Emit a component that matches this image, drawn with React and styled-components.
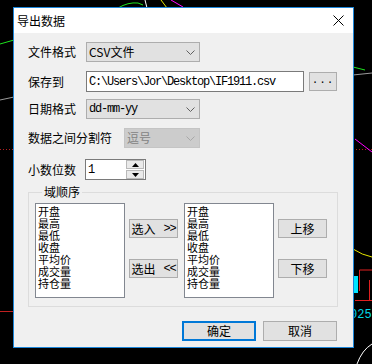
import React from 'react';
import styled, { createGlobalStyle } from 'styled-components';

const GlobalStyle = createGlobalStyle`
  html, body {
    margin: 0;
    padding: 0;
    background: #000;
  }
  body {
    font-family: "Noto Sans CJK SC", "DejaVu Sans", sans-serif;
    font-size: 12px;
    color: #000;
  }
`;

const Desktop = styled.div`
  position: relative;
  width: 372px;
  height: 364px;
  overflow: hidden;
  box-sizing: border-box;
  padding: 7px 0 0 13px;
  background: #000;
`;

const Chart = styled.svg`
  position: absolute;
  left: 0;
  top: 0;
  width: 372px;
  height: 364px;
`;

const Dialog = styled.div`
  position: relative;
  width: 341px;
  height: 341px;
  box-sizing: border-box;
  border: 1px solid #1c86d9;
  background: #f0f0f0;
  display: flex;
  flex-direction: column;
`;

const TitleBar = styled.div`
  height: 25px;
  background: #fff;
  display: flex;
  align-items: center;
  justify-content: space-between;
  padding: 0 9px 0 3px;
  font-size: 12px;
`;

const Body = styled.div`
  flex: 1;
  display: flex;
  flex-direction: column;
  padding: 9px 16px 0 14px;
`;

const Row = styled.div`
  display: flex;
  align-items: center;
  height: ${(p) => p.$h || 20}px;
  margin-top: ${(p) => p.$mt || 0}px;
`;

const Label = styled.div`
  width: ${(p) => p.$w || 58}px;
  flex: none;
  line-height: 12px;
  white-space: nowrap;
`;

const Select = styled.div`
  width: ${(p) => p.$w || 114}px;
  height: 20px;
  box-sizing: border-box;
  border: 1px solid ${(p) => (p.$disabled ? '#c4c4c4' : '#adadad')};
  background: ${(p) => (p.$disabled ? '#cccccc' : '#e1e1e1')};
  color: ${(p) => (p.$disabled ? '#838383' : '#000')};
  display: flex;
  align-items: center;
  justify-content: space-between;
  padding: 0 4px 0 2px;
  line-height: 12px;
`;

const Mono = styled.span`
  font-family: "Liberation Mono", "DejaVu Sans Mono", monospace;
  font-size: 12px;
  letter-spacing: -1.2px;
`;

const TextBox = styled.div`
  width: ${(p) => p.$w}px;
  height: 21px;
  box-sizing: border-box;
  border: 1px solid #7a7a7a;
  background: #fff;
  display: flex;
  align-items: center;
  padding-left: 2px;
  line-height: 12px;
`;

const SmallButton = styled.div`
  width: 28px;
  height: 19px;
  box-sizing: border-box;
  margin-left: 5px;
  border: 1px solid #adadad;
  background: #e1e1e1;
  display: flex;
  align-items: center;
  justify-content: center;
  font-family: "Liberation Mono", monospace;
  font-size: 11px;
  letter-spacing: 1px;
  padding-bottom: 3px;
`;

const SpinBox = styled.div`
  width: 61px;
  height: 21px;
  box-sizing: border-box;
  border: 1px solid #7a7a7a;
  background: #fff;
  display: flex;
  align-items: stretch;
`;

const SpinValue = styled.div`
  flex: 1;
  display: flex;
  align-items: center;
  padding-left: 2px;
`;

const SpinButtons = styled.div`
  width: 18px;
  display: flex;
  flex-direction: column;
  gap: 1px;
  padding: 0 1px 0 0;
  background: #fff;
`;

const SpinArrow = styled.div`
  flex: 1;
  border: 1px solid #b9b9b9;
  background: #eaeaea;
  display: flex;
  align-items: center;
  justify-content: center;
`;

const Group = styled.fieldset`
  margin: 6px 0 0 0;
  width: 310px;
  box-sizing: border-box;
  border: 1px solid #dcdcdc;
  padding: 5px 0 8px 6px;
  min-width: 0;
`;

const Legend = styled.legend`
  margin-left: 7px;
  padding: 0 2px;
  line-height: 12px;
  font-size: 12px;
`;

const GroupInner = styled.div`
  display: flex;
  align-items: flex-start;
`;

const ListBox = styled.div`
  width: 90px;
  height: 95px;
  box-sizing: border-box;
  border: 1px solid #828790;
  background: #fff;
  padding: 1px 0 0 2px;
  margin-right: ${(p) => p.$mr || 0}px;
`;

const ListItem = styled.div`
  height: 12px;
  line-height: 12px;
  font-size: 11px;
  white-space: nowrap;
`;

const ButtonColumn = styled.div`
  display: flex;
  flex-direction: column;
  gap: 21px;
  padding-top: 16px;
  margin-left: 4px;
  margin-right: ${(p) => p.$mr || 0}px;
`;

const Button = styled.div`
  width: ${(p) => p.$w || 49}px;
  height: ${(p) => p.$h || 19}px;
  box-sizing: border-box;
  border: ${(p) => (p.$primary ? '2px solid #0078d7' : '1px solid #adadad')};
  background: #e1e1e1;
  display: flex;
  align-items: center;
  justify-content: center;
  gap: ${(p) => p.$gap || 0}px;
  line-height: 12px;
  white-space: nowrap;
`;

const Footer = styled.div`
  display: flex;
  justify-content: flex-end;
  gap: 7px;
  margin-top: 14px;
`;

const Chevron = ({ color = '#606060' }) => (
  <svg width="9" height="5" viewBox="0 0 9 5">
    <path d="M0.5 0.5 L4.5 4.5 L8.5 0.5" fill="none" stroke={color} strokeWidth="1" />
  </svg>
);

const CloseIcon = () => (
  <svg width="11" height="11" viewBox="0 0 11 11">
    <path d="M0.5 0.5 L10.5 10.5 M10.5 0.5 L0.5 10.5" stroke="#000" strokeWidth="1" />
  </svg>
);

const Triangle = ({ up }) => (
  <svg width="7" height="4" viewBox="0 0 7 4">
    <path d={up ? 'M0 4 L3.5 0 L7 4 Z' : 'M0 0 L3.5 4 L7 0 Z'} fill="#000" />
  </svg>
);

const fields = ['开盘', '最高', '最低', '收盘', '平均价', '成交量', '持仓量'];

function Background() {
  return (
    <Chart viewBox="0 0 372 364">
      <path d="M118 8 Q128 2 138 3 L143 5" stroke="#1ee41e" fill="none" />
      <path d="M145 0 L147 8" stroke="#fff" fill="none" />
      <path d="M161 0 L167 8" stroke="#e6e600" fill="none" />
      <path d="M171 0 L183 7" stroke="#ff00ff" fill="none" />
      <path d="M0 44 L14 40" stroke="#1ee41e" fill="none" />
      <path d="M0 100 L14 97" stroke="#9a9a9a" fill="none" />
      <path d="M353 67 L365 70" stroke="#1ee41e" fill="none" />
      <path d="M353 75 L372 73" stroke="#9a9a9a" fill="none" />
      <path d="M0 149.5 L14 149.5 M353 149.5 L372 149.5" stroke="#b02020" strokeDasharray="1 2" />
      <path d="M355 139 L372 152" stroke="#ff00ff" fill="none" />
      <path d="M353 249 Q362 255 372 257" stroke="#e6e600" fill="none" />
      <path d="M359.5 291 L359.5 270 L372 270" stroke="#e02020" fill="none" />
      <path d="M369.5 280 L369.5 300 M355 300.5 L372 300.5" stroke="#e02020" fill="none" />
      <rect x="353" y="276" width="5" height="17" fill="#00e5ff" />
      <path d="M0 311.5 L14 311.5" stroke="#c02020" />
      <text x="350" y="318" fill="#00d8e8" fontFamily="Liberation Mono, monospace" fontSize="12">025</text>
      <path d="M357 364 Q362 350 372 344" stroke="#fff" fill="none" />
    </Chart>
  );
}

export default function App() {
  return (
    <>
      <GlobalStyle />
      <Desktop>
        <Background />
        <Dialog>
          <TitleBar>
            <span>导出数据</span>
            <CloseIcon />
          </TitleBar>
          <Body>
            <Row>
              <Label>文件格式</Label>
              <Select>
                <span>CSV文件</span>
                <Chevron />
              </Select>
            </Row>
            <Row $mt={9} $h={21}>
              <Label>保存到</Label>
              <TextBox $w={219}>
                <Mono>C:\Users\Jor\Desktop\IF1911.csv</Mono>
              </TextBox>
              <SmallButton>...</SmallButton>
            </Row>
            <Row $mt={7}>
              <Label>日期格式</Label>
              <Select>
                <Mono>dd-mm-yy</Mono>
                <Chevron />
              </Select>
            </Row>
            <Row $mt={9}>
              <Label $w={96}>数据之间分割符</Label>
              <Select $w={76} $disabled>
                <span>逗号</span>
                <Chevron color="#a8a8a8" />
              </Select>
            </Row>
            <Row $mt={11} $h={21}>
              <Label $w={57}>小数位数</Label>
              <SpinBox>
                <SpinValue><Mono>1</Mono></SpinValue>
                <SpinButtons>
                  <SpinArrow><Triangle up /></SpinArrow>
                  <SpinArrow><Triangle /></SpinArrow>
                </SpinButtons>
              </SpinBox>
            </Row>
            <Group>
              <Legend>域顺序</Legend>
              <GroupInner>
                <ListBox>
                  {fields.map((f) => <ListItem key={f}>{f}</ListItem>)}
                </ListBox>
                <ButtonColumn $mr={6}>
                  <Button $gap={8}><span>选入</span><Mono>&gt;&gt;</Mono></Button>
                  <Button $gap={8}><span>选出</span><Mono>&lt;&lt;</Mono></Button>
                </ButtonColumn>
                <ListBox>
                  {fields.map((f) => <ListItem key={f}>{f}</ListItem>)}
                </ListBox>
                <ButtonColumn>
                  <Button>上移</Button>
                  <Button>下移</Button>
                </ButtonColumn>
              </GroupInner>
            </Group>
            <Footer>
              <Button $w={74} $h={20} $primary>确定</Button>
              <Button $w={74} $h={20}>取消</Button>
            </Footer>
          </Body>
        </Dialog>
      </Desktop>
    </>
  );
}
